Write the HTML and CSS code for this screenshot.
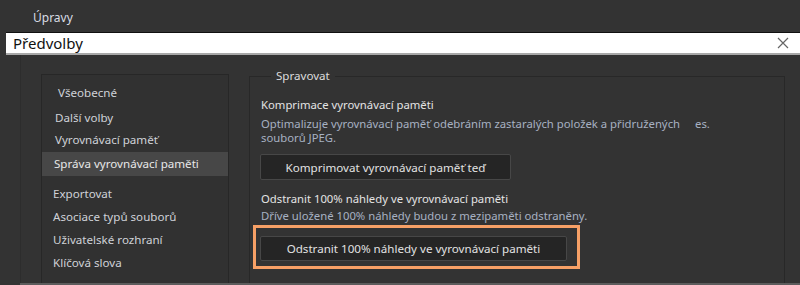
FILE: index.html
```html
<!DOCTYPE html>
<html lang="cs">

<head>
    <meta charset="UTF-8">
    <title>Předvolby</title>
    <link rel="stylesheet" href="styles.css">
</head>

<body>
    <div class="menu">Úpravy</div>

    <div class="titlebar">
        <span class="title">Předvolby</span>
        <svg class="close" width="12" height="12" viewBox="0 0 12 12">
            <path d="M1 1 L11 11 M11 1 L1 11" stroke="#666" stroke-width="1.2" fill="none"/>
        </svg>
    </div>

    <div class="dialog">
        <ul class="side">
            <li class="item first">Všeobecné</li>
            <li class="item">Další volby</li>
            <li class="item">Vyrovnávací paměť</li>
            <li class="item sel">Správa vyrovnávací paměti</li>
            <li class="item low">Exportovat</li>
            <li class="item low">Asociace typů souborů</li>
            <li class="item low">Uživatelské rozhraní</li>
            <li class="item low">Klíčová slova</li>
        </ul>

        <fieldset class="main">
            <legend>Spravovat</legend>

            <div class="section-title">Komprimace vyrovnávací paměti</div>
            <div class="desc">Optimalizuje vyrovnávací paměť odebráním zastaralých položek a přidružených<span class="cut">es.</span><br>souborů JPEG.</div>
            <button class="btn btn-compress">Komprimovat vyrovnávací paměť teď</button>

            <div class="section-title second">Odstranit 100% náhledy ve vyrovnávací paměti</div>
            <div class="desc short">Dříve uložené 100% náhledy budou z mezipaměti odstraněny.</div>
            <div class="highlight">
                <button class="btn btn-remove">Odstranit 100% náhledy ve vyrovnávací paměti</button>
            </div>
        </fieldset>
    </div>

    <div class="bottom-line"></div>
</body>

</html>
```

FILE: styles.css
```css
body {
    margin: 0;
    width: 800px;
    height: 285px;
    overflow: hidden;
    background-color: #333333;
    font-family: "Noto Sans", "Open Sans", sans-serif;
    font-size: 11.3px;
    color: #d4d4d4;
    position: relative;
}

.menu {
    height: 32px;
    line-height: 36px;
    padding-left: 33px;
    font-size: 12px;
    color: #d8dce4;
}

.titlebar {
    margin-left: 6px;
    height: 20px;
    background-color: #ffffff;
    border-top: 1px solid #111111;
    border-bottom: 2px solid #a8a8a8;
    display: flex;
    align-items: center;
    justify-content: space-between;
}

.title {
    padding-left: 7px;
    font-size: 15px;
    color: #111111;
}

.close {
    margin-right: 11px;
}

.dialog {
    display: flex;
    align-items: flex-start;
    border-left: 1px solid #2d2d2d;
    margin-left: 20px;
    height: 230px;
}

.side {
    list-style: none;
    margin: 19px 0 0 20px;
    padding: 7px 0 0 0;
    width: 186px;
    height: 202px;
    background-color: #313131;
    border: 1px solid #272727;
    border-bottom: none;
    font-size: 11.6px;
}

.item {
    height: 22px;
    line-height: 22px;
    padding-left: 13px;
    color: #cfd2d8;
}

.item.first {
    padding-left: 16px;
    margin-bottom: 3px;
}

.item.sel {
    height: 24px;
    line-height: 24px;
    margin-top: 1px;
    margin-bottom: 6px;
    padding-left: 12px;
    background-color: #474747;
    color: #e8e8e8;
}

.item.low {
    height: 23px;
    line-height: 23px;
    padding-left: 11px;
}

.main {
    margin: 14px 0 0 20px;
    padding: 14px 0 0 11px;
    width: 523px;
    height: 210px;
    border: 1px solid #282828;
    border-bottom: none;
}

.main legend {
    margin-left: 10px;
    padding: 0 5px;
    line-height: 14px;
    font-size: 11.6px;
    color: #dcdcdc;
}

.section-title {
    line-height: 16px;
    color: #e4e4e4;
}

.section-title.second {
    margin-top: 11px;
}

.desc {
    margin-top: 4px;
    line-height: 14px;
    color: #a7b1c2;
}

.desc.short {
    margin-top: 2px;
}

.cut {
    margin-left: 15px;
}

.btn {
    display: block;
    height: 26px;
    padding: 0;
    background-color: #252525;
    border: 1px solid #474747;
    border-radius: 2px;
    font-family: "Noto Sans", "Open Sans", sans-serif;
    font-size: 11.6px;
    color: #e2e2e2;
}

.btn-compress {
    width: 251px;
    margin: 9px 0 0 -1px;
}

.highlight {
    width: 317px;
    height: 30px;
    margin: 2px 0 0 -8px;
    border: 3px solid #f7a066;
    padding: 8px 0 0 4px;
}

.btn-remove {
    width: 307px;
    height: 25px;
}

.bottom-line {
    position: absolute;
    left: 20px;
    right: 0;
    top: 283px;
    height: 2px;
    background-color: #5c5c5c;
}
```
